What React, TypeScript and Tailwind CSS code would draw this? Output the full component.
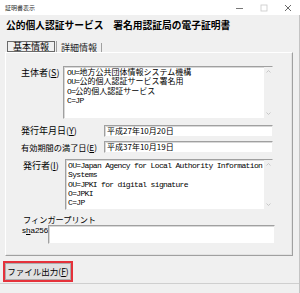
import React from "react";

const jp = { fontFamily: '"Noto Sans CJK JP", "Noto Sans", sans-serif' };
const mono = { fontFamily: '"Liberation Mono", "Noto Sans CJK JP", monospace' };

function M({ children }: { children: React.ReactNode }) {
  return <span style={mono} className="tracking-[-0.67px]">{children}</span>;
}

function Scroll() {
  return (
    <div className="w-[8px] bg-[#f0f0f0] flex flex-col justify-between items-center py-[3px]">
      <svg width="5" height="3" viewBox="0 0 5 3">
        <path d="M0.5 2.5 L2.5 0.5 L4.5 2.5" fill="none" stroke="#bdbdbd" strokeWidth="0.8" />
      </svg>
      <svg width="5" height="3" viewBox="0 0 5 3">
        <path d="M0.5 0.5 L2.5 2.5 L4.5 0.5" fill="none" stroke="#bdbdbd" strokeWidth="0.8" />
      </svg>
    </div>
  );
}

const sunken =
  "bg-white border border-t-[#a0a0a0] border-l-[#a0a0a0] border-r-[#f0f0f0] border-b-[#f0f0f0] shadow-[inset_1px_1px_0_#d8d8d8]";

function Label({ text, k }: { text: string; k: string }) {
  return (
    <span className="whitespace-nowrap">
      {text}(<span className="underline underline-offset-1">{k}</span>)
    </span>
  );
}

export default function App() {
  return (
    <div className="w-[300px] h-[293px] bg-[#f0f0f0] flex flex-col overflow-hidden text-[9px] leading-[10px] text-black" style={jp}>
      {/* title bar */}
      <div className="h-[15px] bg-white flex items-center shrink-0">
        <span className="ml-[5px] text-[6px] leading-[6px] text-[#333]">証明書表示</span>
        <div className="ml-auto flex items-center">
          <svg width="8" height="8" viewBox="0 0 8 8" className="mr-[16px]">
            <line x1="0" y1="4.5" x2="7" y2="4.5" stroke="#555" strokeWidth="0.8" />
          </svg>
          <svg width="8" height="8" viewBox="0 0 8 8" className="mr-[16px]">
            <rect x="1" y="1" width="6" height="6" fill="none" stroke="#c8c8c8" strokeWidth="0.8" />
          </svg>
          <svg width="8" height="8" viewBox="0 0 8 8" className="mr-[8px]">
            <path d="M1 1 L7 7 M7 1 L1 7" stroke="#444" strokeWidth="0.8" />
          </svg>
        </div>
      </div>

      <div className="flex-1 flex flex-col border-r border-[#c4c4c4]">
        {/* heading */}
        <div className="mt-[3px] ml-[6px] h-[14px] text-[9.75px] leading-[14px] font-bold whitespace-nowrap">
          公的個人認証サービス　署名用認証局の電子証明書
        </div>

        {/* tabs */}
        <div className="mt-[9px] ml-[7px] flex h-[11px] leading-[9px]">
          <div className="w-[48px] h-[11px] border border-[#6a6a6a] flex items-center justify-center">
            基本情報
          </div>
          <div className="w-[1px] h-[11px] bg-[#a0a0a0] ml-[1px]" />
          <div className="w-[45px] h-[9px] mt-[2px] border-r border-[#a0a0a0] flex items-center justify-center text-[#222]">
            詳細情報
          </div>
        </div>

        {/* panel */}
        <div className="ml-[5px] w-[288px] h-[204px] shrink-0 border border-t-white border-l-white border-r-[#a0a0a0] border-b-[#a0a0a0] shadow-[inset_-1px_-1px_0_#e3e3e3] flex flex-col pt-[13px]">
          {/* subject */}
          <div className="flex items-start">
            <div className="w-[57px] pl-[15px] pt-[2px]">
              <Label text="主体者" k="S" />
            </div>
            <div className={`w-[210px] h-[53px] flex ${sunken}`}>
              <div className="flex-1 pl-[3px] pt-[1px] text-[8px] leading-[8.4px] whitespace-pre">
                <div><M>OU=</M>地方公共団体情報システム機構</div>
                <div><M>OU=</M>公的個人認証サービス署名用</div>
                <div><M>O=</M>公的個人認証サービス</div>
                <div><M>C=JP</M></div>
              </div>
              <Scroll />
            </div>
          </div>

          {/* issue date */}
          <div className="flex items-center mt-[6px] h-[12px]">
            <div className="w-[98px] pl-[15px]">
              <Label text="発行年月日" k="Y" />
            </div>
            <div className={`w-[169px] h-[12px] flex items-center pl-[2px] text-[8px] leading-[8px] ${sunken}`}>
              平成27年10月20日
            </div>
          </div>

          {/* expiry */}
          <div className="flex items-center mt-[4px] h-[12px]">
            <div className="w-[98px] pl-[15px] text-[8.2px]">
              <Label text="有効期間の満了日" k="E" />
            </div>
            <div className={`w-[169px] h-[12px] flex items-center pl-[2px] text-[8px] leading-[8px] ${sunken}`}>
              平成37年10月19日
            </div>
          </div>

          {/* issuer */}
          <div className="flex items-start mt-[6px]">
            <div className="w-[59px] pl-[17px] pt-[2px]">
              <Label text="発行者" k="I" />
            </div>
            <div className={`w-[208px] h-[51px] flex ${sunken}`}>
              <div className="flex-1 pl-[2px] pt-[1px] text-[8px] leading-[8.3px] whitespace-pre overflow-hidden">
                <div><M>OU=Japan Agency for Local Authority Information</M></div>
                <div><M>Systems</M></div>
                <div><M>OU=JPKI for digital signature</M></div>
                <div><M>O=JPKI</M></div>
                <div><M>C=JP</M></div>
              </div>
              <Scroll />
            </div>
          </div>

          {/* fingerprint */}
          <div className="mt-[4px] pl-[17px] h-[10px] text-[8.2px] whitespace-nowrap">フィンガープリント</div>
          <div className="flex items-start mt-[1px]">
            <div className="w-[42px] pl-[16px] pt-[2px] text-[8px] leading-[8px] whitespace-nowrap" style={{ fontFamily: '"Liberation Sans", sans-serif' }}>
              s<span className="underline">h</span>a256
            </div>
            <div className={`w-[227px] h-[19px] ${sunken}`} />
          </div>
        </div>

        {/* button */}
        <div className="mt-[5px] ml-[3px] w-[70px] h-[21px] border-2 border-[#e5323b] flex shrink-0">
          <div className="flex-1 bg-[#e1e1e1] border border-[#adadad] flex items-center justify-center text-[8.5px] leading-[9px]">
            <span className="whitespace-nowrap">
              ファイル出力(<span className="underline underline-offset-1">F</span>)
            </span>
          </div>
        </div>

        <div className="mt-[1px] border-t border-[#cfcfcf]" />
      </div>
    </div>
  );
}
